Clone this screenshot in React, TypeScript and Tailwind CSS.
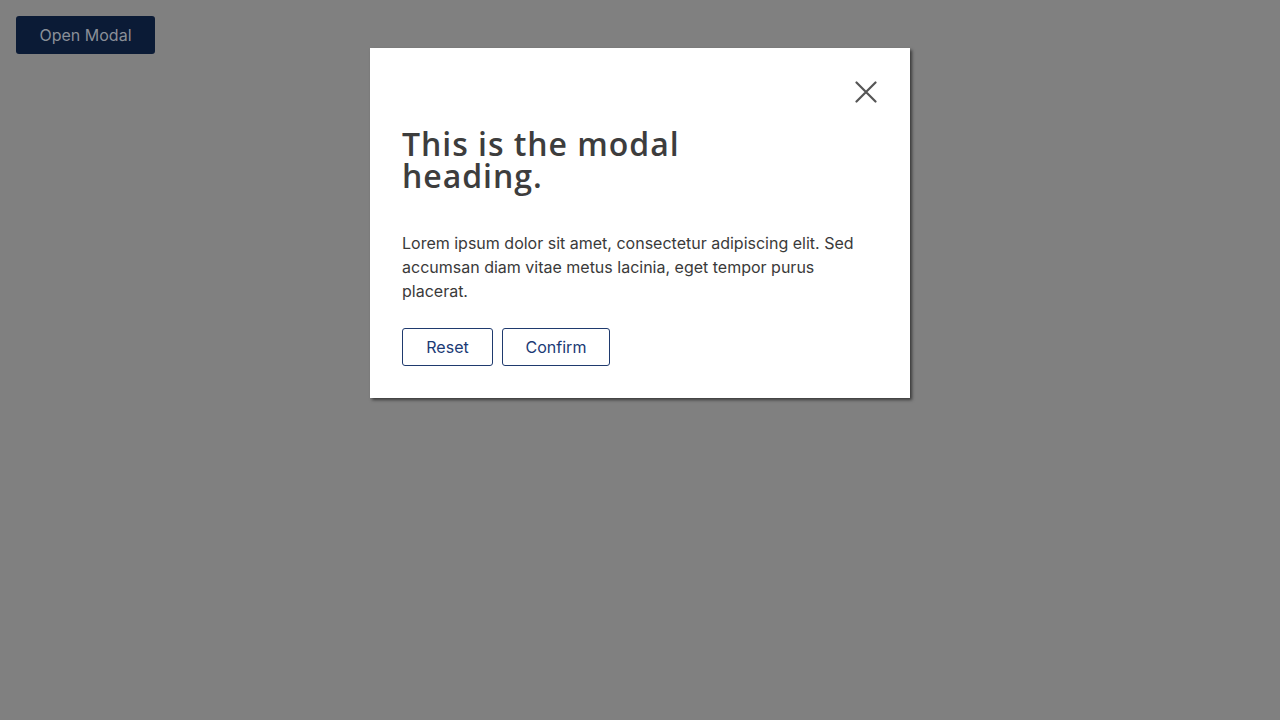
export default function App() {
  return (
    <div className="relative h-[720px] w-[1280px] bg-[#808080] font-['Inter','Noto_Sans',sans-serif]">
      {/* page trigger (dimmed by overlay) */}
      <div className="p-4">
        <button className="h-[38px] w-[139px] rounded-[3px] bg-[#0b1b36] text-base text-[#8a8f98]">
          Open Modal
        </button>
      </div>

      {/* ── Modal ── */}
      <div className="absolute left-[370px] top-[48px] flex w-[540px] flex-col bg-white px-8 pt-8 pb-8 shadow-[2px_2px_3px_rgba(0,0,0,0.55)]">
        <div className="flex justify-end">
          <button aria-label="Close" className="mr-[1px] mt-[1px] h-[22px] w-[22px] text-[#555]">
            <svg viewBox="0 0 22 22" width="22" height="22" fill="none" stroke="currentColor" strokeWidth="2.2" strokeLinecap="round">
              <path d="M1.5 1.5 20.5 20.5M20.5 1.5 1.5 20.5" />
            </svg>
          </button>
        </div>

        <h2 className="mt-[25px] max-w-[340px] font-['Open_Sans',sans-serif] text-[32px] leading-[32px] font-semibold tracking-[0.03em] text-[#3d3d3d]">
          This is the modal heading.
        </h2>

        <p className="mt-[39px] text-base leading-6 text-[#3a3a3a]">
          Lorem ipsum dolor sit amet, consectetur adipiscing elit. Sed accumsan diam vitae metus lacinia, eget tempor purus placerat.
        </p>

        <div className="mt-[25px] flex gap-[9px]">
          <button className="h-[38px] w-[91px] rounded-[3px] border border-[#1f3a6e] text-base text-[#1b3a75]">
            Reset
          </button>
          <button className="h-[38px] w-[108px] rounded-[3px] border border-[#1f3a6e] text-base text-[#1b3a75]">
            Confirm
          </button>
        </div>
      </div>
    </div>
  );
}
